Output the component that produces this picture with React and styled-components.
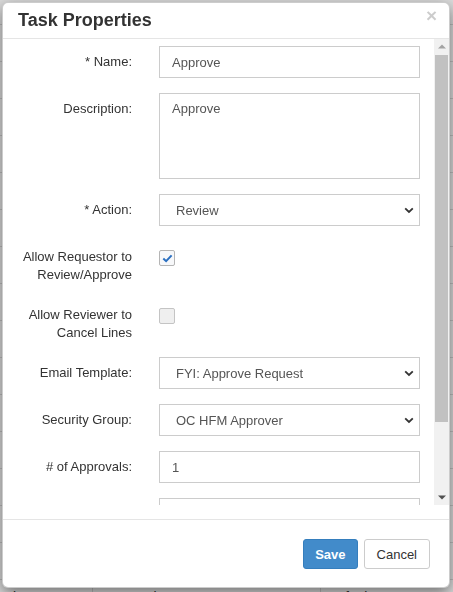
import React from 'react';
import styled, { createGlobalStyle } from 'styled-components';

const Global = createGlobalStyle`
  html, body { margin: 0; padding: 0; }
  body {
    font-family: "Liberation Sans", Arial, sans-serif;
    font-size: 13px;
    color: #333;
    background: #fff;
    overflow: hidden;
  }
  * { box-sizing: border-box; }
`;

const Page = styled.div`
  height: 100vh;
  overflow: hidden;
  padding-top: 24px;
  margin-left: -18px;
`;

const BgRow = styled.div`
  display: grid;
  grid-template-columns: 110px 228px 160px 1fr;
  height: 37px;
  border-top: 1px solid #ddd;
`;

const BgCell = styled.div`
  padding: 7px 6px 0;
  font-size: 14px;
  line-height: 20px;
  color: #333;
  white-space: nowrap;
  overflow: hidden;
  border-left: ${(p) => (p.$first ? 'none' : '1px solid #ddd')};
`;

const Backdrop = styled.div`
  position: fixed;
  inset: 0;
  background: rgba(0, 0, 0, 0.14);
`;

const Modal = styled.div`
  position: fixed;
  top: 2px;
  left: 2px;
  width: 448px;
  height: 586px;
  background: #fff;
  border: 1px solid rgba(0, 0, 0, 0.2);
  border-radius: 6px;
  box-shadow: 0 5px 15px rgba(0, 0, 0, 0.5);
  display: flex;
  flex-direction: column;
  overflow: hidden;
`;

const Header = styled.div`
  height: 36px;
  flex: none;
  padding: 0 12px 0 15px;
  border-bottom: 1px solid #e5e5e5;
  display: flex;
  align-items: center;
  justify-content: space-between;
`;

const Title = styled.h4`
  margin: 0 0 1px;
  font-size: 18px;
  font-weight: bold;
  line-height: 20px;
  color: #333;
`;

const Close = styled.button`
  align-self: flex-start;
  margin-top: 3px;
  padding: 0;
  border: 0;
  background: transparent;
  font-family: "Liberation Sans", Arial, sans-serif;
  font-size: 19px;
  font-weight: bold;
  line-height: 20px;
  color: #000;
  opacity: 0.2;
  cursor: pointer;
`;

const Body = styled.div`
  flex: none;
  padding-bottom: 14px;
`;

const ScrollArea = styled.div`
  height: 466px;
  display: flex;
`;

const Content = styled.div`
  flex: 1;
  min-width: 0;
  overflow: hidden;
  padding-top: 7px;
`;

const ScrollBar = styled.div`
  flex: none;
  width: 15px;
  background: #f1f1f1;
  display: flex;
  flex-direction: column;
`;

const ScrollButton = styled.div`
  flex: none;
  height: 15px;
  display: flex;
  align-items: center;
  justify-content: center;
`;

const Track = styled.div`
  flex: 1;
  padding: 1px 1px 0;
`;

const Thumb = styled.div`
  height: 367px;
  background: #c1c1c1;
`;

const Row = styled.div`
  display: grid;
  grid-template-columns: 129px 261px;
  column-gap: 27px;
  margin-bottom: 15px;
`;

const Label = styled.label`
  text-align: right;
  padding-top: 7px;
  font-size: 13px;
  line-height: 18px;
  color: #333;
`;

const Input = styled.input`
  display: block;
  width: 100%;
  height: 32px;
  margin: 0;
  padding: 6px 12px;
  border: 1px solid #ccc;
  border-radius: 0;
  font-family: "Liberation Sans", Arial, sans-serif;
  font-size: 13px;
  color: #555;
  background: #fff;
  outline: none;
`;

const TextArea = styled.textarea`
  display: block;
  width: 100%;
  height: 86px;
  margin: 0;
  padding: 6px 12px;
  border: 1px solid #ccc;
  border-radius: 0;
  font-family: "Liberation Sans", Arial, sans-serif;
  font-size: 13px;
  line-height: 18px;
  color: #555;
  resize: none;
  outline: none;
`;

const SelectWrap = styled.div`
  position: relative;
`;

const Select = styled.select`
  display: block;
  width: 100%;
  height: 32px;
  margin: 0;
  padding: 0 30px 0 16px;
  border: 1px solid #ccc;
  border-radius: 0;
  appearance: none;
  background: #fff;
  font-family: "Liberation Sans", Arial, sans-serif;
  font-size: 13px;
  color: #555;
  outline: none;
`;

const Chevron = styled.svg`
  position: absolute;
  right: 6px;
  top: 13px;
  pointer-events: none;
`;

const Check = styled.span`
  width: 16px;
  height: 16px;
  margin-top: 9px;
  border: 1px solid ${(p) => (p.$on ? '#b5b5b5' : '#c4c4c4')};
  border-radius: 2px;
  background: ${(p) => (p.$on ? '#f7f8fa' : '#efefef')};
  display: flex;
  align-items: center;
  justify-content: center;
`;

const Footer = styled.div`
  flex: none;
  border-top: 1px solid #e5e5e5;
  padding: 19px 19px 18px;
  display: flex;
  justify-content: flex-end;
  gap: 6px;
`;

const Button = styled.button`
  height: 30px;
  padding: 0 ${(p) => (p.$primary ? '11px' : '12px')};
  border: 1px solid ${(p) => (p.$primary ? '#357ebd' : '#ccc')};
  border-radius: 3px;
  background: ${(p) => (p.$primary ? '#428bca' : '#fff')};
  color: ${(p) => (p.$primary ? '#fff' : '#333')};
  font-family: "Liberation Sans", Arial, sans-serif;
  font-size: 13px;
  font-weight: ${(p) => (p.$primary ? 'bold' : 'normal')};
  cursor: pointer;
`;

const ChevronIcon = () => (
  <Chevron width="10" height="7" viewBox="0 0 10 7">
    <path d="M1.2 1.3 L5 5 L8.8 1.3" fill="none" stroke="#333" strokeWidth="1.8" />
  </Chevron>
);

const SelectField = ({ value }) => (
  <SelectWrap>
    <Select defaultValue={value}>
      <option>{value}</option>
    </Select>
    <ChevronIcon />
  </SelectWrap>
);

const CheckBox = ({ on }) => (
  <Check $on={on}>
    {on && (
      <svg width="11" height="9" viewBox="0 0 11 9">
        <path d="M1.3 4.6 L4.1 7.2 L9.6 1.4" fill="none" stroke="#2a6fc0" strokeWidth="2" />
      </svg>
    )}
  </Check>
);

const Arrow = ({ up, color }) => (
  <svg width="8" height="5" viewBox="0 0 8 5">
    <path d={up ? 'M0 4.5 L4 0.5 L8 4.5 Z' : 'M0 0.5 L4 4.5 L8 0.5 Z'} fill={color} />
  </svg>
);

const bgRows = Array.from({ length: 15 }, () => ['', '', '', '']).concat([
  ['Review', 'FYI: Review Request', 'Default', 'Edit'],
]);

export default function App() {
  return (
    <>
      <Global />
      <Page>
        {bgRows.map((r, i) => (
          <BgRow key={i}>
            {r.map((c, j) => (
              <BgCell key={j} $first={j === 0}>
                {c}
              </BgCell>
            ))}
          </BgRow>
        ))}
      </Page>
      <Backdrop />
      <Modal>
        <Header>
          <Title>Task Properties</Title>
          <Close aria-label="Close">×</Close>
        </Header>
        <Body>
          <ScrollArea>
            <Content>
              <Row>
                <Label>* Name:</Label>
                <Input defaultValue="Approve" />
              </Row>
              <Row>
                <Label>Description:</Label>
                <TextArea defaultValue="Approve" />
              </Row>
              <Row>
                <Label>* Action:</Label>
                <SelectField value="Review" />
              </Row>
              <Row>
                <Label>
                  Allow Requestor to
                  <br />
                  Review/Approve
                </Label>
                <div>
                  <CheckBox on />
                </div>
              </Row>
              <Row>
                <Label>
                  Allow Reviewer to
                  <br />
                  Cancel Lines
                </Label>
                <div>
                  <CheckBox />
                </div>
              </Row>
              <Row>
                <Label>Email Template:</Label>
                <SelectField value="FYI: Approve Request" />
              </Row>
              <Row>
                <Label>Security Group:</Label>
                <SelectField value="OC HFM Approver" />
              </Row>
              <Row>
                <Label># of Approvals:</Label>
                <Input defaultValue="1" />
              </Row>
              <Row>
                <Label>Due Days:</Label>
                <Input defaultValue="" />
              </Row>
              <Row>
                <Label>Sequence:</Label>
                <Input defaultValue="" />
              </Row>
            </Content>
            <ScrollBar>
              <ScrollButton>
                <Arrow up color="#a3a3a3" />
              </ScrollButton>
              <Track>
                <Thumb />
              </Track>
              <ScrollButton>
                <Arrow color="#505050" />
              </ScrollButton>
            </ScrollBar>
          </ScrollArea>
        </Body>
        <Footer>
          <Button $primary>Save</Button>
          <Button>Cancel</Button>
        </Footer>
      </Modal>
    </>
  );
}
